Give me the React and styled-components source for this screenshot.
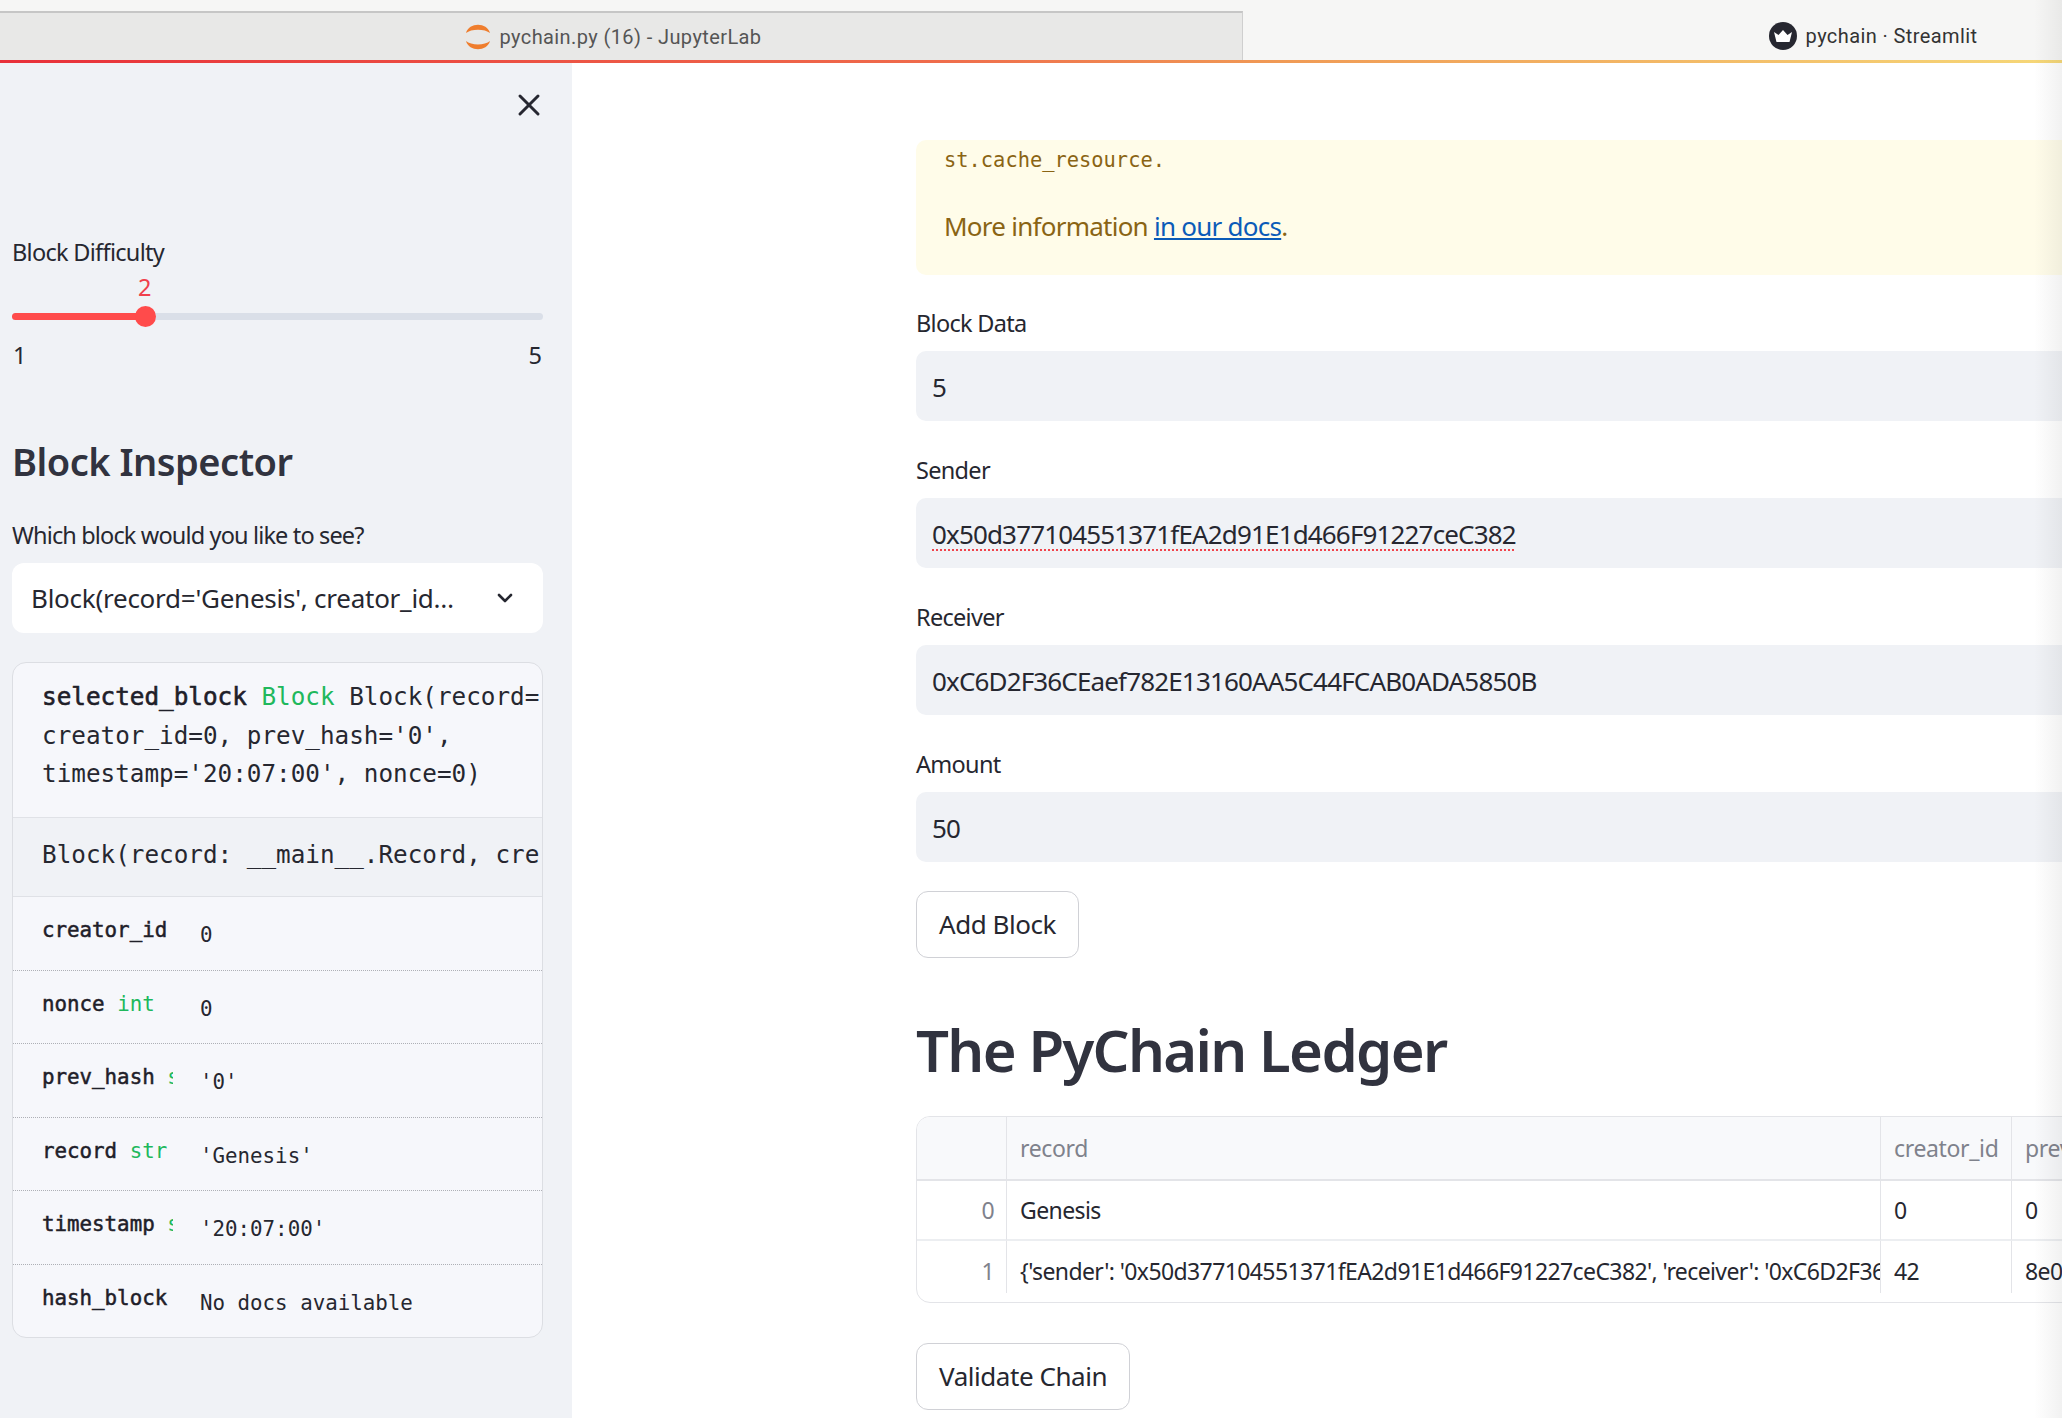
import React from 'react';
import styled, { createGlobalStyle } from 'styled-components';
import { ChevronDown, X } from 'lucide-react';

const GlobalStyle = createGlobalStyle`
  html, body {
    margin: 0;
    padding: 0;
    background: #fff;
  }
  * {
    box-sizing: border-box;
  }
`;

const sans = `'Noto Sans', 'Open Sans', sans-serif`;
const mono = `'DejaVu Sans Mono', 'Liberation Mono', monospace`;

const Page = styled.div`
  position: relative;
  width: 2062px;
  height: 1418px;
  overflow: hidden;
  display: flex;
  flex-direction: column;
  font-family: ${sans};
  color: #262730;
`;

const TabBar = styled.div`
  display: flex;
  height: 60px;
  flex-shrink: 0;
  overflow: hidden;
  background: #f6f6f5;
  padding-top: 11px;
`;

const Tab = styled.div`
  width: ${p => p.$width}px;
  flex-shrink: 0;
  display: flex;
  align-items: center;
  justify-content: center;
  gap: 9px;
  font-family: 'Roboto', sans-serif;
  font-size: 20px;
  letter-spacing: 0.4px;
  color: ${p => (p.$active ? '#555' : '#333')};
  ${p => p.$active && `
    padding-right: 16px;
    background: #e8e8e7;
    border-top: 2px solid #c6c6c6;
    border-right: 1px solid #cfcfcf;
  `}
`;

const Loader = styled.div`
  height: 3px;
  flex-shrink: 0;
  background: linear-gradient(90deg, #e8303a 0%, #ef6b4b 45%, #f09a55 62%, #f6d878 100%);
`;

const Body = styled.div`
  flex: 1;
  display: flex;
  min-height: 0;
`;

const Sidebar = styled.aside`
  width: 572px;
  flex-shrink: 0;
  background: #f0f2f6;
  padding: 0 29px 0 12px;
`;

const CloseRow = styled.div`
  height: 84px;
  display: flex;
  align-items: center;
  justify-content: flex-end;
  color: #262730;
`;

const CloseIcon = styled(X)`
  margin-right: -4px;
`;

const Label = styled.div`
  font-size: 23.5px;
  letter-spacing: -0.7px;
  line-height: 34px;
  color: #262730;
`;

const SliderBlock = styled.div`
  margin-top: 88px;
`;

const SliderTrack = styled.div`
  position: relative;
  height: 7px;
  margin-top: 44px;
  border-radius: 4px;
  background: #dadfe8;
`;

const SliderFill = styled.div`
  height: 100%;
  border-radius: 4px;
  background: #ff4b4b;
`;

const SliderThumb = styled.div`
  position: absolute;
  top: -7px;
  width: 21px;
  height: 21px;
  margin-left: -10px;
  border-radius: 50%;
  background: #ff4b4b;
`;

const SliderValue = styled.div`
  position: absolute;
  top: -41px;
  width: 30px;
  margin-left: -15px;
  text-align: center;
  font-size: 23.5px;
  line-height: 30px;
  color: #f0404c;
`;

const Ticks = styled.div`
  display: flex;
  justify-content: space-between;
  margin-top: 19px;
  font-size: 23.5px;
  line-height: 32px;
  padding: 0 1px;
`;

const SideHeading = styled.h2`
  margin: 64px 0 0;
  font-size: 38px;
  font-weight: 600;
  letter-spacing: -0.5px;
  line-height: 52px;
  color: #31333f;
`;

const SelectLabel = styled(Label)`
  margin-top: 31px;
  letter-spacing: -0.85px;
`;

const Select = styled.div`
  display: flex;
  align-items: center;
  justify-content: space-between;
  height: 70px;
  margin-top: 11px;
  padding: 0 26px 0 19px;
  border-radius: 12px;
  background: #fff;
  font-size: 26px;
  letter-spacing: -0.25px;
  color: #262730;
`;

const SelectText = styled.span`
  white-space: nowrap;
`;

const InspectCard = styled.div`
  margin-top: 29px;
  height: 676px;
  border: 1.5px solid #dcdee3;
  border-radius: 14px;
  background: #f6f7fb;
  overflow: hidden;
  font-family: ${mono};
`;

const Summary = styled.div`
  height: 155px;
  padding: 15px 0 0 29px;
  font-size: 24.3px;
  line-height: 38.5px;
  border-bottom: 1.5px solid #e0e2e7;
`;

const ClipText = styled.div`
  margin-right: 2px;
  white-space: pre;
  overflow: hidden;
`;

const Strong = styled.span`
  -webkit-text-stroke: 0.6px currentColor;
  color: #1f2029;
`;

const TypeName = styled.span`
  color: #20b85c;
  -webkit-text-stroke: 0;
`;

const DocsRow = styled.div`
  height: 79px;
  padding: 0 0 6px 29px;
  display: flex;
  align-items: center;
  font-size: 24.3px;
  background: #f0f2f6;
  border-bottom: 1.5px solid #dfe1e6;
`;

const MemberRow = styled.div`
  display: flex;
  height: 73.5px;
  padding: 19px 0 0 29px;
  font-size: 20.8px;
  line-height: 28px;
  white-space: pre;
  border-bottom: ${p => (p.$last ? 'none' : '1px dotted #aeb0b6')};
`;

const MemberKey = styled.div`
  width: 131px;
  flex-shrink: 0;
  overflow: hidden;
  -webkit-text-stroke: 0.5px currentColor;
  color: #1f2029;
`;

const MemberValue = styled.div`
  margin-left: 27px;
  padding-top: 5px;
  font-size: 20.8px;
  color: #262730;
`;

const Main = styled.main`
  flex: 1;
  min-width: 0;
  padding: 77px 0 0 344px;
  overflow: hidden;
`;

const Alert = styled.div`
  height: 135px;
  width: 1200px;
  padding-top: 6px;
  padding-left: 28px;
  border-radius: 10px;
  background: #fffce9;
  color: #8a6414;
`;

const AlertCode = styled.div`
  font-family: ${mono};
  font-size: 20.4px;
  line-height: 28px;
`;

const AlertText = styled.div`
  margin-top: 32px;
  font-size: 26px;
  letter-spacing: -0.75px;
  line-height: 40px;
`;

const DocLink = styled.a`
  color: #0b5bb8;
  text-decoration: underline;
`;

const Field = styled.div`
  margin-top: ${p => p.$top}px;
`;

const InputBox = styled.div`
  width: 1200px;
  height: 70px;
  margin-top: 11px;
  padding: 2px 0 0 16px;
  display: flex;
  align-items: center;
  border-radius: 10px;
  background: #f0f2f6;
  font-size: 26px;
  letter-spacing: -0.85px;
  color: #262730;
`;

const Misspelled = styled.span`
  text-decoration: underline dotted #f0444c 2px;
  text-underline-offset: 5px;
`;

const Button = styled.button`
  display: block;
  height: 67px;
  padding: 0 22px 2px;
  border: 1.5px solid #d0d1d6;
  border-radius: 12px;
  background: #fff;
  font-family: ${sans};
  font-size: 26px;
  letter-spacing: -0.45px;
  color: #262730;
  margin-top: ${p => p.$top}px;
`;

const Heading = styled.h1`
  margin: 52px 0 0;
  font-size: 58px;
  font-weight: 600;
  letter-spacing: -1.65px;
  line-height: 80px;
  color: #31333f;
`;

const LedgerFrame = styled.div`
  width: 1200px;
  height: 187px;
  margin-top: 26px;
  border: 1.5px solid #e3e4e8;
  border-radius: 14px;
  overflow: hidden;
`;

const LedgerGrid = styled.div`
  display: grid;
  grid-template-columns: 90px 874px 131px 200px;
  grid-template-rows: 64px 60px 52px;
  font-size: 23px;
  letter-spacing: -0.6px;
  color: #262730;
`;

const HeadCell = styled.div`
  display: flex;
  align-items: center;
  padding-left: 13px;
  background: #f8f9fb;
  color: #7f828c;
  letter-spacing: -0.35px;
  white-space: nowrap;
  overflow: hidden;
  border-right: 1.5px solid #e3e4e8;
  border-bottom: 2px solid #e3e4e8;
`;

const IndexCell = styled.div`
  display: flex;
  align-items: center;
  justify-content: flex-end;
  padding-right: 12px;
  color: #7f828c;
  border-right: 1.5px solid #e3e4e8;
  border-bottom: ${p => (p.$last ? 'none' : '2px solid #eceef1')};
  padding-top: ${p => (p.$last ? 8 : 0)}px;
`;

const Cell = styled.div`
  display: flex;
  align-items: center;
  padding-left: 13px;
  white-space: nowrap;
  overflow: hidden;
  border-right: 1.5px solid #e3e4e8;
  border-bottom: ${p => (p.$last ? 'none' : '2px solid #eceef1')};
  padding-top: ${p => (p.$last ? 8 : 0)}px;
`;

const EdgeShadow = styled.div`
  position: absolute;
  top: 0;
  right: 0;
  bottom: 0;
  width: 28px;
  background: linear-gradient(90deg, rgba(60, 60, 60, 0), rgba(60, 60, 60, 0.07));
  pointer-events: none;
`;

const JupyterIcon = () => (
  <svg width="26" height="26" viewBox="0 0 26 26" fill="#ef7d2d">
    <path d="M1 9 C4 -2 22 -2 25 9 C20 4.5 6 4.5 1 9 Z" />
    <path d="M1 17 C6 21.5 20 21.5 25 17 C22 28 4 28 1 17 Z" />
  </svg>
);

const StreamlitIcon = () => (
  <svg width="28" height="28" viewBox="0 0 28 28">
    <circle cx="14" cy="14" r="14" fill="#262730" />
    <path d="M5 10 L9.5 13 L14 8 L18.5 13 L23 10 L20.5 20 L7.5 20 Z" fill="#fff" />
  </svg>
);

const members = [
  { name: 'creator_id', value: '0' },
  { name: 'nonce', type: 'int', value: '0' },
  { name: 'prev_hash', type: 'str', value: "'0'" },
  { name: 'record', type: 'str', value: "'Genesis'" },
  { name: 'timestamp', type: 'str', value: "'20:07:00'" },
  { name: 'hash_block', value: 'No docs available' },
];

const difficulty = { min: 1, max: 5, value: 2 };
const sliderPercent = ((difficulty.value - difficulty.min) / (difficulty.max - difficulty.min)) * 100;

export default function App() {
  return (
    <Page>
      <GlobalStyle />
      <TabBar>
        <Tab $active $width={1243}>
          <JupyterIcon />
          pychain.py (16) - JupyterLab
        </Tab>
        <Tab $width={1260}>
          <StreamlitIcon />
          pychain · Streamlit
        </Tab>
      </TabBar>
      <Loader />
      <Body>
        <Sidebar>
          <CloseRow>
            <CloseIcon size={36} strokeWidth={2} />
          </CloseRow>
          <SliderBlock>
            <Label>Block Difficulty</Label>
            <SliderTrack>
              <SliderFill style={{ width: `${sliderPercent}%` }} />
              <SliderThumb style={{ left: `${sliderPercent}%` }} />
              <SliderValue style={{ left: `${sliderPercent}%` }}>{difficulty.value}</SliderValue>
            </SliderTrack>
            <Ticks>
              <span>{difficulty.min}</span>
              <span>{difficulty.max}</span>
            </Ticks>
          </SliderBlock>
          <SideHeading>Block Inspector</SideHeading>
          <SelectLabel>Which block would you like to see?</SelectLabel>
          <Select>
            <SelectText>Block(record='Genesis', creator_id…</SelectText>
            <ChevronDown size={24} strokeWidth={2.6} />
          </Select>
          <InspectCard>
            <Summary>
              <ClipText>
                <Strong>selected_block</Strong> <TypeName>Block</TypeName> Block(record='Genesis',{'\n'}
                creator_id=0, prev_hash='0',{'\n'}
                timestamp='20:07:00', nonce=0)
              </ClipText>
            </Summary>
            <DocsRow>
              <ClipText>Block(record: __main__.Record, creator_id: int)</ClipText>
            </DocsRow>
            {members.map((m, i) => (
              <MemberRow key={m.name} $last={i === members.length - 1}>
                <MemberKey>
                  {m.name}
                  {m.type && <TypeName> {m.type}</TypeName>}
                </MemberKey>
                <MemberValue>{m.value}</MemberValue>
              </MemberRow>
            ))}
          </InspectCard>
        </Sidebar>
        <Main>
          <Alert>
            <AlertCode>st.cache_resource.</AlertCode>
            <AlertText>
              More information <DocLink href="#docs">in our docs</DocLink>.
            </AlertText>
          </Alert>
          <Field $top={31}>
            <Label>Block Data</Label>
            <InputBox>5</InputBox>
          </Field>
          <Field $top={32}>
            <Label>Sender</Label>
            <InputBox>
              <Misspelled>0x50d377104551371fEA2d91E1d466F91227ceC382</Misspelled>
            </InputBox>
          </Field>
          <Field $top={32}>
            <Label>Receiver</Label>
            <InputBox>0xC6D2F36CEaef782E13160AA5C44FCAB0ADA5850B</InputBox>
          </Field>
          <Field $top={32}>
            <Label>Amount</Label>
            <InputBox>50</InputBox>
          </Field>
          <Button $top={29}>Add Block</Button>
          <Heading>The PyChain Ledger</Heading>
          <LedgerFrame>
            <LedgerGrid>
              <HeadCell />
              <HeadCell>record</HeadCell>
              <HeadCell>creator_id</HeadCell>
              <HeadCell>prev_hash</HeadCell>
              <IndexCell>0</IndexCell>
              <Cell>Genesis</Cell>
              <Cell>0</Cell>
              <Cell>0</Cell>
              <IndexCell $last>1</IndexCell>
              <Cell $last>
                {"{'sender': '0x50d377104551371fEA2d91E1d466F91227ceC382', 'receiver': '0xC6D2F36CEaef782E13160AA5C44FCAB0ADA5850B', 'amount': '50'}"}
              </Cell>
              <Cell $last>42</Cell>
              <Cell $last>8e0a1f3c</Cell>
            </LedgerGrid>
          </LedgerFrame>
          <Button $top={40}>Validate Chain</Button>
        </Main>
      </Body>
      <EdgeShadow />
    </Page>
  );
}
